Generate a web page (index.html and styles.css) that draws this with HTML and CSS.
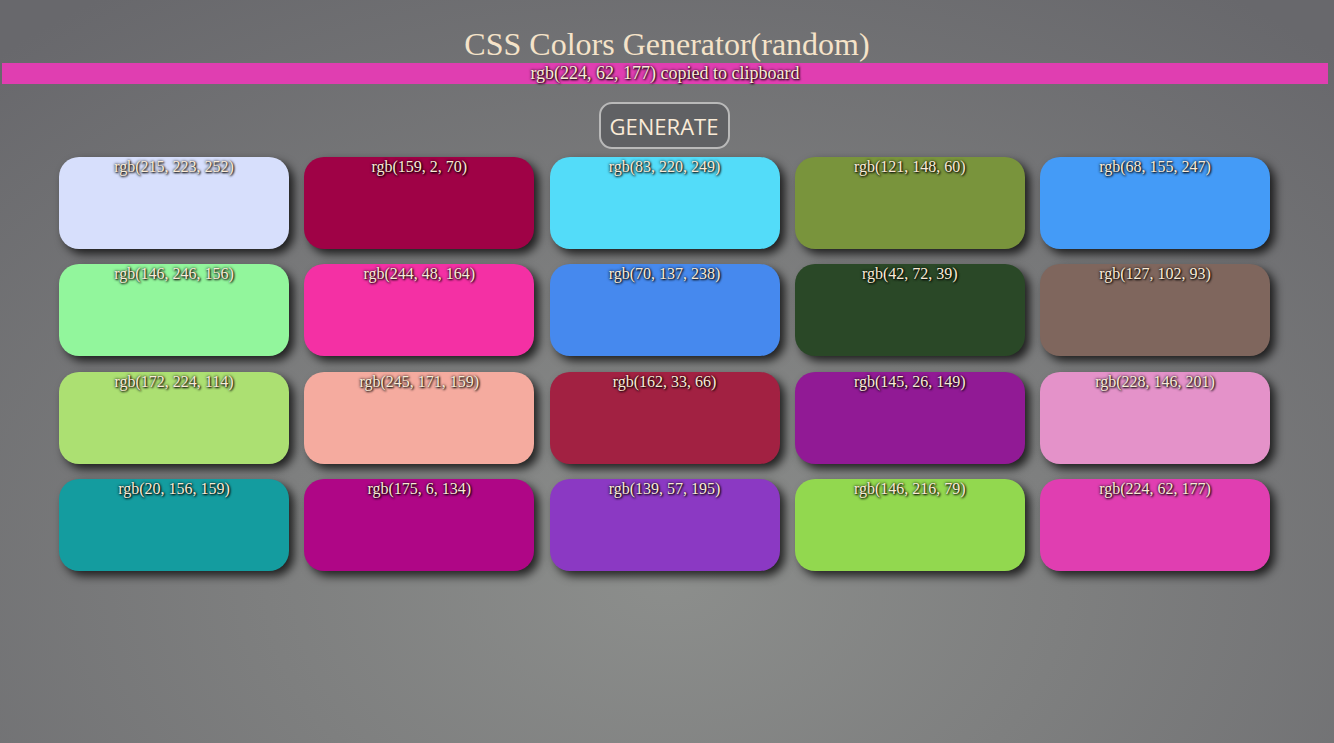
FILE: index.html
```html
<!DOCTYPE html>
<html>
<head>
<meta charset="utf-8">
<title>CSS Colors Generator</title>
<link rel="stylesheet" href="styles.css">
</head>
<body>
<h1 class="title">CSS Colors Generator(random)</h1>
<div class="notice" style="background: rgb(224, 62, 177);">rgb(224, 62, 177) copied to clipboard</div>
<div class="actions"><button class="generate">GENERATE</button></div>
<div class="grid">
  <div class="swatch" style="background: rgb(215, 223, 252);">rgb(215, 223, 252)</div>
  <div class="swatch" style="background: rgb(159, 2, 70);">rgb(159, 2, 70)</div>
  <div class="swatch" style="background: rgb(83, 220, 249);">rgb(83, 220, 249)</div>
  <div class="swatch" style="background: rgb(121, 148, 60);">rgb(121, 148, 60)</div>
  <div class="swatch" style="background: rgb(68, 155, 247);">rgb(68, 155, 247)</div>
  <div class="swatch" style="background: rgb(146, 246, 156);">rgb(146, 246, 156)</div>
  <div class="swatch" style="background: rgb(244, 48, 164);">rgb(244, 48, 164)</div>
  <div class="swatch" style="background: rgb(70, 137, 238);">rgb(70, 137, 238)</div>
  <div class="swatch" style="background: rgb(42, 72, 39);">rgb(42, 72, 39)</div>
  <div class="swatch" style="background: rgb(127, 102, 93);">rgb(127, 102, 93)</div>
  <div class="swatch" style="background: rgb(172, 224, 114);">rgb(172, 224, 114)</div>
  <div class="swatch" style="background: rgb(245, 171, 159);">rgb(245, 171, 159)</div>
  <div class="swatch" style="background: rgb(162, 33, 66);">rgb(162, 33, 66)</div>
  <div class="swatch" style="background: rgb(145, 26, 149);">rgb(145, 26, 149)</div>
  <div class="swatch" style="background: rgb(228, 146, 201);">rgb(228, 146, 201)</div>
  <div class="swatch" style="background: rgb(20, 156, 159);">rgb(20, 156, 159)</div>
  <div class="swatch" style="background: rgb(175, 6, 134);">rgb(175, 6, 134)</div>
  <div class="swatch" style="background: rgb(139, 57, 195);">rgb(139, 57, 195)</div>
  <div class="swatch" style="background: rgb(146, 216, 79);">rgb(146, 216, 79)</div>
  <div class="swatch" style="background: rgb(224, 62, 177);">rgb(224, 62, 177)</div>
</div>
</body>
</html>
```
FILE: styles.css
```css
html, body {
  margin: 0;
  padding: 0;
}
body {
  width: 1334px;
  height: 743px;
  overflow: hidden;
  background: radial-gradient(ellipse 75% 95% at 50% 78%, #8c8e8c 0%, #7e7f7f 40%, #68686c 100%);
  font-family: "Liberation Serif", "Times New Roman", serif;
  color: #faebd7;
}
.title {
  margin: 0;
  padding-top: 26px;
  height: 37px;
  font-size: 32px;
  font-weight: normal;
  line-height: 37px;
  text-align: center;
  color: #f5e3c9;
}
.notice {
  margin: 0 6px 0 2px;
  height: 21px;
  line-height: 21px;
  font-size: 18px;
  text-align: center;
  color: #faebd7;
  text-shadow: 0 0 3px #000, 1px 1px 2px #000;
}
.actions {
  display: flex;
  justify-content: center;
  padding-top: 18px;
  padding-right: 6px;
}
.generate {
  width: 131px;
  height: 47px;
  border: 2px solid #b9b9b9;
  border-radius: 13px;
  background: #606164;
  color: #faebd7;
  font-family: "Open Sans", "DejaVu Sans", sans-serif;
  font-size: 22px;
  padding: 0;
  letter-spacing: 0;
}
.grid {
  display: grid;
  grid-template-columns: repeat(5, 230px);
  column-gap: 15.25px;
  row-gap: 15.33px;
  margin: 8px 0 0 59px;
}
.swatch {
  height: 92px;
  border-radius: 20px;
  box-shadow: 5px 5px 10px rgba(0, 0, 0, 0.75);
  text-align: center;
  font-size: 16px;
  line-height: 18px;
  padding-top: 1px;
  box-sizing: border-box;
  color: #faebd7;
  text-shadow: 0 0 3px #000, 1px 1px 2px #000;
}
```
